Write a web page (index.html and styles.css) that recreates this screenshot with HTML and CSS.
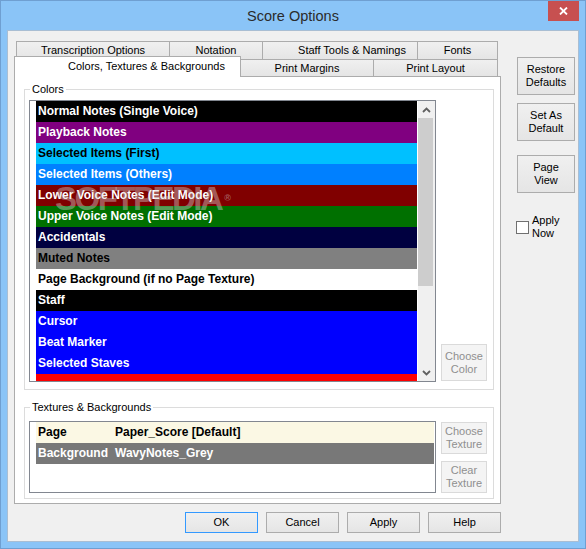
FILE: index.html
```html
<!DOCTYPE html>
<html>
<head>
<meta charset="utf-8">
<link rel="stylesheet" href="styles.css">
</head>
<body>
<div class="window">
  <div class="titlebar">
    <span class="title">Score Options</span>
    <div class="close"><svg width="9" height="8" viewBox="0 0 9 8"><path d="M1 0.5 L8 7.5 M8 0.5 L1 7.5" stroke="#fff" stroke-width="1.8" fill="none"/></svg></div>
  </div>
  <div class="client">
    <div class="main">
      <div class="tabctl">
        <div class="tabrow row1">
          <div class="tab t-trans">Transcription Options</div>
          <div class="tab t-nota">Notation</div>
          <div class="tab t-staff">Staff Tools &amp; Namings</div>
          <div class="tab t-fonts last">Fonts</div>
        </div>
        <div class="tabrow row2">
          <div class="tab sel t-colors">Colors, Textures &amp; Backgrounds</div>
          <div class="tab t-margins">Print Margins</div>
          <div class="tab t-layout last">Print Layout</div>
        </div>
        <div class="panel">
          <div class="group g-colors">
            <div class="legend">Colors</div>
            <div class="gbody">
              <div class="listbox colorlist">
                <div class="rows">
                  <div class="crow c-black">Normal Notes (Single Voice)</div>
                  <div class="crow c-purple">Playback Notes</div>
                  <div class="crow c-cyan">Selected Items (First)</div>
                  <div class="crow c-azure">Selected Items (Others)</div>
                  <div class="crow c-maroon">Lower Voice Notes (Edit Mode)</div>
                  <div class="crow c-green">Upper Voice Notes (Edit Mode)</div>
                  <div class="crow c-navy">Accidentals</div>
                  <div class="crow c-gray">Muted Notes</div>
                  <div class="crow c-white">Page Background (if no Page Texture)</div>
                  <div class="crow c-black">Staff</div>
                  <div class="crow c-blue">Cursor</div>
                  <div class="crow c-blue">Beat Marker</div>
                  <div class="crow c-blue">Selected Staves</div>
                  <div class="crow c-red">&nbsp;</div>
                </div>
                <div class="scrollbar">
                  <div class="sb-btn"><svg width="9" height="6" viewBox="0 0 9 6"><path d="M1 5 L4.5 1.5 L8 5" stroke="#606060" stroke-width="1.8" fill="none"/></svg></div>
                  <div class="sb-thumb"></div>
                  <div class="sb-track"></div>
                  <div class="sb-btn"><svg width="9" height="6" viewBox="0 0 9 6"><path d="M1 1 L4.5 4.5 L8 1" stroke="#606060" stroke-width="1.8" fill="none"/></svg></div>
                </div>
                <div class="watermark">SOFTPEDIA<span class="reg">®</span></div>
              </div>
              <div class="btn disabled b-color">Choose<br>Color</div>
            </div>
          </div>
          <div class="group g-tex">
            <div class="legend">Textures &amp; Backgrounds</div>
            <div class="gbody">
              <div class="listbox texlist">
                <div class="trow t-page"><span>Page</span><span>Paper_Score [Default]</span></div>
                <div class="trow t-bg"><span>Background</span><span>WavyNotes_Grey</span></div>
              </div>
              <div class="texbtns">
                <div class="btn disabled b-tex">Choose<br>Texture</div>
                <div class="btn disabled b-tex">Clear<br>Texture</div>
              </div>
            </div>
          </div>
        </div>
      </div>
      <div class="side">
        <div class="btn sbtn">Restore<br>Defaults</div>
        <div class="btn sbtn s2">Set As<br>Default</div>
        <div class="btn sbtn s3">Page<br>View</div>
        <div class="check">
          <span class="box"></span>
          <span class="clabel">Apply<br>Now</span>
        </div>
      </div>
    </div>
    <div class="footer">
      <div class="btn fbtn default">OK</div>
      <div class="btn fbtn">Cancel</div>
      <div class="btn fbtn">Apply</div>
      <div class="btn fbtn">Help</div>
    </div>
  </div>
</div>
</body>
</html>
```

FILE: styles.css
```css
* { box-sizing: border-box; }
html, body { margin: 0; padding: 0; }
body {
  width: 586px;
  height: 549px;
  overflow: hidden;
  font-family: "Liberation Sans", Arial, sans-serif;
  font-size: 11px;
  color: #000;
}
.window {
  width: 586px;
  height: 549px;
  background: #8ac4f7;
  border: 1px solid #6f9fd1;
  display: flex;
  flex-direction: column;
}
.titlebar {
  height: 29px;
  display: grid;
  grid-template-columns: 1fr auto 1fr;
}
.title {
  grid-column: 2;
  font-size: 14.5px;
  line-height: 30px;
  color: #2b2b2b;
}
.close {
  grid-column: 3;
  justify-self: end;
  align-self: start;
  margin-right: 6px;
  width: 31px;
  height: 20px;
  background: #c75050;
  display: flex;
  align-items: center;
  justify-content: center;
}
.client {
  margin: 0 6px 6px;
  flex: 1;
  background: #f0f0f0;
  border: 1px solid #a9bed3;
  padding: 10px 0 0 6px;
}
.main { display: flex; }
.tabctl { width: 487px; }

.tabrow { display: flex; white-space: nowrap; }
.row1 { height: 18px; margin-left: 2px; }
.row2 { height: 17px; }
.tab {
  border: 1px solid #acacac;
  border-bottom: none;
  border-right: none;
  background: linear-gradient(#f0f0f0, #e5e5e5);
  text-align: center;
  overflow: hidden;
}
.tab.last { border-right: 1px solid #acacac; }
.row1 .tab { line-height: 17px; }
.row2 .tab { line-height: 16px; }
.t-trans { width: 153px; }
.t-nota { width: 93px; }
.t-staff { width: 155px; padding-left: 24px; }
.t-fonts { width: 81px; }
.tab.sel {
  width: 227px;
  height: 21px;
  margin-top: -3px;
  background: #fff;
  border-right: 1px solid #acacac;
  position: relative;
  z-index: 2;
  line-height: 19px;
  padding-left: 38px;
}
.t-margins { width: 132px; border-left: none; }
.t-layout { width: 125px; }

.panel {
  background: #fff;
  border: 1px solid #acacac;
  height: 428px;
  padding: 12px 6px 0 9px;
}
.group {
  width: 470px;
  border: 1px solid #dcdcdc;
}
.g-colors { height: 301px; }
.g-tex { height: 92px; margin-top: 17px; }
.legend {
  width: fit-content;
  margin: -8px 0 0 5px;
  padding: 0 2px;
  background: #fff;
  line-height: 15px;
}
.gbody {
  display: flex;
  padding: 3px 6px 0 4px;
  gap: 5px;
}
.g-tex .gbody { padding-top: 6px; }

.listbox {
  border: 1px solid #828790;
  background: #fff;
  width: 407px;
  overflow: hidden;
}
.colorlist {
  height: 282px;
  display: flex;
  padding-left: 6px;
  gap: 1px;
  position: relative;
}
.rows { width: 381px; }
.crow {
  height: 21px;
  line-height: 21px;
  padding-left: 2px;
  font-weight: bold;
  font-size: 12px;
  white-space: nowrap;
  color: #fff;
}
.c-black { background: #000; }
.c-purple { background: #800080; }
.c-cyan { background: #00c0ff; color: #000; }
.c-azure { background: #0080ff; }
.c-maroon { background: #800000; }
.c-green { background: #007000; }
.c-navy { background: #000040; }
.c-gray { background: #808080; color: #000; }
.c-white { background: #fff; color: #000; }
.c-blue { background: #0000ff; }
.c-red { background: #ff0000; }

.scrollbar {
  width: 17px;
  background: #f0f0f0;
  display: flex;
  flex-direction: column;
}
.sb-btn {
  height: 17px;
  display: flex;
  align-items: center;
  justify-content: center;
}
.sb-thumb {
  height: 168px;
  width: 15px;
  background: #cdcdcd;
}
.sb-track { flex: 1; }

.watermark {
  position: absolute;
  left: 25px;
  top: 81px;
  font-size: 33px;
  font-weight: bold;
  letter-spacing: -2.5px;
  color: rgba(215, 215, 215, 0.42);
  line-height: 33px;
  white-space: nowrap;
  pointer-events: none;
}
.watermark .reg {
  font-size: 9px;
  vertical-align: top;
  letter-spacing: 0;
  margin-left: 3px;
}

.texlist {
  height: 72px;
  padding: 0 1px 0 6px;
}
.trow {
  height: 21px;
  line-height: 21px;
  display: grid;
  grid-template-columns: 77px 1fr;
  font-weight: bold;
  font-size: 12px;
  white-space: nowrap;
}
.trow span { padding-left: 2px; }
.t-page { background: #fbf8e4; }
.t-bg { background: #787878; color: #fff; }
.texbtns {
  display: flex;
  flex-direction: column;
  gap: 7px;
  padding-top: 1px;
}

.btn {
  border: 1px solid #acacac;
  background: linear-gradient(#f0f0f0, #e5e5e5);
  text-align: center;
  display: flex;
  align-items: center;
  justify-content: center;
  line-height: 13px;
}
.btn.disabled {
  background: #f4f4f4;
  border-color: #dadada;
  color: #8f8f8f;
}
.b-color {
  width: 46px;
  height: 37px;
  align-self: flex-end;
  margin-bottom: 1px;
}
.b-tex { width: 46px; height: 32px; }

.side {
  margin-left: 16px;
  margin-top: 16px;
  width: 58px;
  display: flex;
  flex-direction: column;
}
.sbtn { height: 38px; }
.s2 { margin-top: 8px; }
.s3 { margin-top: 14px; }
.check {
  margin-top: 21px;
  margin-left: -1px;
  display: flex;
  align-items: center;
  gap: 3px;
}
.box {
  width: 13px;
  height: 13px;
  border: 1px solid #707070;
  background: #fff;
}
.clabel { line-height: 13px; }

.footer {
  margin-top: 8px;
  width: 487px;
  display: flex;
  justify-content: flex-end;
  gap: 8px;
}
.fbtn { width: 73px; height: 21px; }
.fbtn.default { border-color: #3399ff; }
```
